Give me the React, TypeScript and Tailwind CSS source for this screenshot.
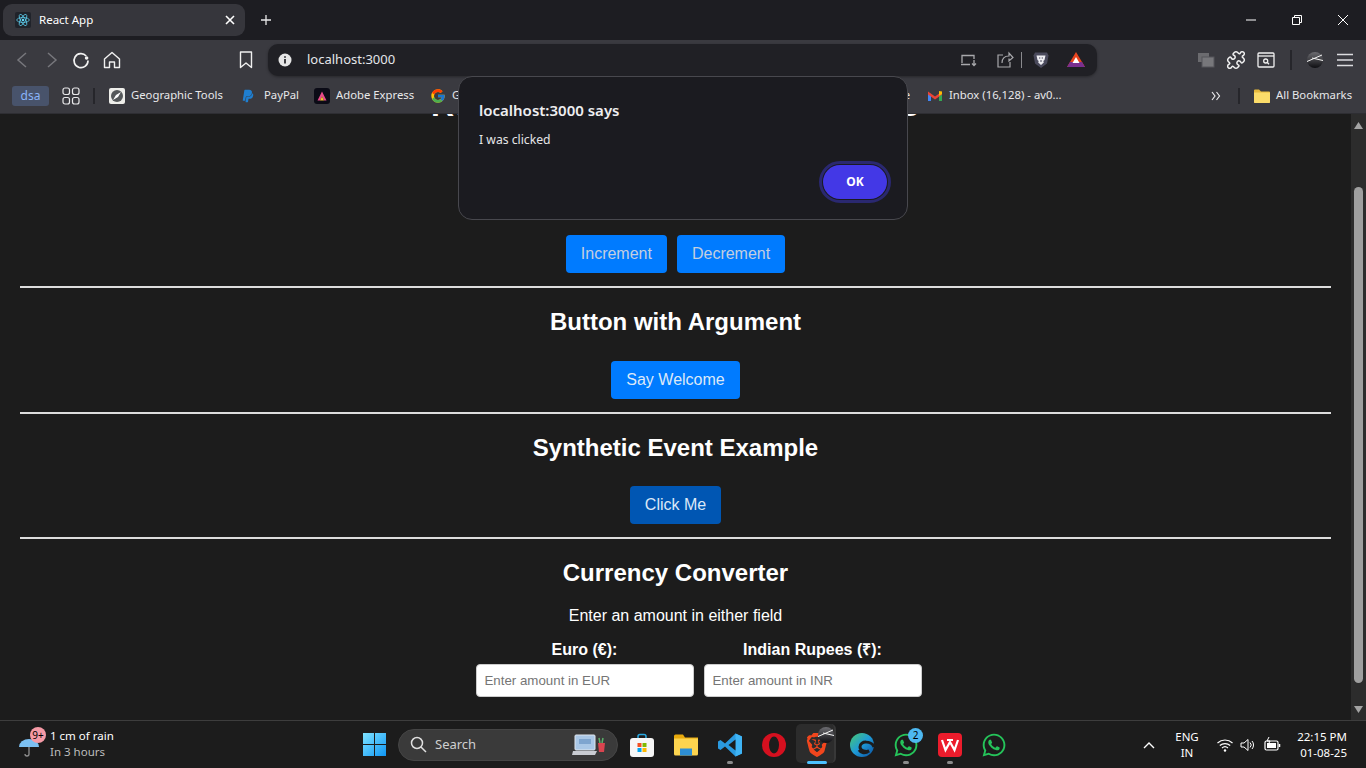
import React from "react";
import { FcGoogle } from "react-icons/fc";
import { FaPaypal, FaWhatsapp } from "react-icons/fa";
import { SiBrave } from "react-icons/si";

const ui = "font-['Noto_Sans','Open_Sans',sans-serif]";
const web = "font-['Liberation_Sans',Arial,sans-serif]";

function S({ w = 20, h = 20, vb = "0 0 20 20", c = "", children }: { w?: number; h?: number; vb?: string; c?: string; children: React.ReactNode }) {
  return (
    <svg width={w} height={h} viewBox={vb} fill="none" className={"shrink-0 " + c}>
      {children}
    </svg>
  );
}

function ReactIcon() {
  return (
    <div className="w-4 h-4 bg-[#20232a] rounded-[2px] flex items-center justify-center">
      <S w={14} h={14} vb="0 0 20 20">
        <circle cx="10" cy="10" r="1.8" fill="#61dafb" />
        <g stroke="#61dafb" strokeWidth="1">
          <ellipse cx="10" cy="10" rx="9" ry="3.5" />
          <ellipse cx="10" cy="10" rx="9" ry="3.5" transform="rotate(60 10 10)" />
          <ellipse cx="10" cy="10" rx="9" ry="3.5" transform="rotate(120 10 10)" />
        </g>
      </S>
    </div>
  );
}

function TitleBar() {
  return (
    <div className="h-10 bg-[#1d1d22] flex items-start shrink-0">
      <div className={"ml-[3px] mt-1 w-[242px] h-8 rounded-[9px] bg-[#36363c] flex items-center pl-3 pr-[9px] text-white text-[11.5px] " + ui}>
        <ReactIcon />
        <span className="ml-2 flex-1">React App</span>
        <S w={12} h={12} vb="0 0 12 12">
          <path d="M2 2l8 8M10 2l-8 8" stroke="#fff" strokeWidth="1.6" />
        </S>
      </div>
      <div className="ml-[15px] mt-[14px]">
        <S w={12} h={12} vb="0 0 12 12">
          <path d="M6 1v10M1 6h10" stroke="#e8e8ea" strokeWidth="1.3" />
        </S>
      </div>
      <div className="ml-auto flex items-center h-10">
        <div className="w-[46px] flex justify-center">
          <S w={10} h={10} vb="0 0 10 10">
            <path d="M0 5h10" stroke="#fff" strokeWidth="1" />
          </S>
        </div>
        <div className="w-[46px] flex justify-center">
          <S w={10} h={10} vb="0 0 10 10">
            <path d="M.5 2.5h7v7h-7zM2.5 2.5V.5h7v7h-2" stroke="#fff" strokeWidth="1" />
          </S>
        </div>
        <div className="w-[46px] flex justify-center">
          <S w={10} h={10} vb="0 0 10 10">
            <path d="M0 0l10 10M10 0L0 10" stroke="#fff" strokeWidth="1" />
          </S>
        </div>
      </div>
    </div>
  );
}

function ToolBar() {
  return (
    <div className="h-10 bg-[#3a3a40] flex items-center shrink-0">
      <div className="w-[268px] flex items-center shrink-0">
        <S w={18} h={18} vb="0 0 18 18" c="ml-[13px]"><path d="M13 2L5 9l8 7" stroke="#77777c" strokeWidth="1.5" /></S>
        <S w={18} h={18} vb="0 0 18 18" c="ml-3"><path d="M5 2l8 7-8 7" stroke="#77777c" strokeWidth="1.5" /></S>
        <S w={20} h={20} vb="0 0 20 20" c="ml-[10px]">
          <path d="M15.2 6A7 7 0 1 0 17 10.5" stroke="#f2f2f2" strokeWidth="1.7" />
          <circle cx="15.6" cy="8" r="1.8" fill="#f2f2f2" />
        </S>
        <S w={18} h={18} vb="0 0 18 18" c="ml-[12px]">
          <path d="M1.5 8L9 1.5 16.5 8v8.5h-5V11h-5v5.500h-5z" stroke="#f0f0f0" strokeWidth="1.4" strokeLinejoin="round" />
        </S>
        <S w={14} h={18} vb="0 0 14 18" c="ml-[118px]">
          <path d="M1.500 1h11v15.500L7 12l-5.500 4.500z" stroke="#f0f0f0" strokeWidth="1.4" strokeLinejoin="round" />
        </S>
      </div>
      <div className="w-[829px] h-8 rounded-[10px] bg-[#202025] flex items-center shrink-0 shadow-[0_1px_3px_rgba(0,0,0,0.35)]">
        <S w={14} h={14} vb="0 0 14 14" c="ml-[10px]">
          <circle cx="7" cy="7" r="6.500" fill="#e6e6e6" />
          <path d="M7 6v4.500M7 3.200v1.500" stroke="#202025" strokeWidth="1.700" />
        </S>
        <span className={"ml-[15px] text-[13px] text-[#e4e6ea] " + ui}>localhost:3000</span>
        <div className="ml-auto flex items-center">
          <S w={18} h={16} vb="0 0 18 16" c="mr-[1px]">
            <path d="M2 11V3.500h12V7M1 12.500h9" stroke="#a8a8ac" strokeWidth="1.300" />
            <path d="M14 8v5M12 11.500l2 2 2-2" stroke="#a8a8ac" strokeWidth="1.300" />
          </S>
          <S w={18} h={18} vb="0 0 18 18" c="ml-[17px]">
            <path d="M7 4H2v12h12v-5" stroke="#a8a8ac" strokeWidth="1.200" />
            <path d="M6 12c0-5 3-7 7-7V2l4 4.500L13 10V7.500" stroke="#a8a8ac" strokeWidth="1.200" />
          </S>
          <div className="ml-[7px] w-px h-4 bg-[#8a8a8e]" />
          <div className="ml-[11px] w-4 h-[18px] relative flex items-center justify-center">
            <S w={16} h={18} vb="0 0 16 18">
              <path d="M2 1.500h12l1.500 3-1.500 8L8 17l-6-4.500-1.500-8z" fill="#4a4a5c" />
              <path d="M3.500 4.500h9l-1 4.500-1.200 1 .5 1.500L8 14l-2.800-2.500.5-1.500-1.200-1z" fill="#eeeef2" />
              <path d="M6 7h1.300M8.700 7H10M8 9v2" stroke="#4a4a5c" strokeWidth="1" />
            </S>
          </div>
          <S w={20} h={18} vb="0 0 20 18" c="ml-[17px] mr-[11px]">
            <path d="M10 1l9 15H1z" fill="#e8441f" />
            <path d="M1 16l3-5h12l3 5z" fill="#7a2f8f" />
            <path d="M10 6l3.500 6h-7z" fill="#fff" />
          </S>
        </div>
      </div>
      <div className="flex-1 flex items-center">
        <S w={18} h={16} vb="0 0 18 16" c="ml-[100px]">
          <rect x="1" y="1" width="11" height="9" fill="#6b6b6f" />
          <rect x="5" y="5" width="12" height="10" fill="#77777b" stroke="#55555a" />
        </S>
        <S w={20} h={20} vb="0 0 24 24" c="ml-[11px]">
          <path d="M19.439 7.850c-.049.322.059.648.289.878l1.568 1.568c.47.47.706 1.087.706 1.704s-.235 1.233-.706 1.704l-1.611 1.611a.98.98 0 0 1-.837.276c-.47-.07-.802-.480-.968-.925a2.501 2.501 0 1 0-3.214 3.214c.446.166.855.497.925.968a.979.979 0 0 1-.276.837l-1.610 1.610a2.404 2.404 0 0 1-1.705.707 2.402 2.402 0 0 1-1.704-.706l-1.568-1.568a1.026 1.026 0 0 0-.877-.290c-.493.074-.840.504-1.020.968a2.500 2.500 0 1 1-3.237-3.237c.464-.180.894-.527.967-1.020a1.026 1.026 0 0 0-.289-.877l-1.568-1.568A2.402 2.402 0 0 1 1.998 12c0-.617.236-1.234.706-1.704L4.230 8.770c.24-.24.581-.353.917-.303.515.077.877.528 1.073 1.010a2.500 2.500 0 1 0 3.259-3.259c-.482-.196-.933-.558-1.010-1.073-.050-.336.062-.676.303-.917l1.525-1.525A2.402 2.402 0 0 1 12 1.998c.617 0 1.234.236 1.704.706l1.568 1.568c.23.230.556.338.877.290.493-.074.840-.504 1.020-.968a2.500 2.500 0 1 1 3.237 3.237c-.464.180-.894.527-.967 1.020Z" stroke="#f0f0f0" strokeWidth="1.800" />
        </S>
        <S w={18} h={16} vb="0 0 18 16" c="ml-[11px]">
          <rect x="1" y="1" width="16" height="14" rx="1" stroke="#f0f0f0" strokeWidth="1.300" />
          <path d="M1 4h16" stroke="#f0f0f0" strokeWidth="1.300" />
          <circle cx="8.700" cy="9" r="2" stroke="#f0f0f0" strokeWidth="1.300" />
          <path d="M10.300 10.500l1.700 1.700" stroke="#f0f0f0" strokeWidth="1.300" />
        </S>
        <div className="ml-[15px] w-[2px] h-5 bg-[#26262b]" />
        <div className="ml-[15px]"><Profile size={16} /></div>
        <S w={16} h={14} vb="0 0 16 14" c="ml-[14px]">
          <path d="M0 1.500h16M0 7h16M0 12.500h16" stroke="#dcdcdf" strokeWidth="1.600" />
        </S>
      </div>
    </div>
  );
}

function Profile({ size }: { size: number }) {
  return (
    <svg width={size} height={size} viewBox="0 0 16 16" className="shrink-0">
      <defs>
        <linearGradient id="pf" x1="0" y1="0" x2="0" y2="1">
          <stop offset="0" stopColor="#6d6d72" />
          <stop offset="1" stopColor="#0e0e12" />
        </linearGradient>
      </defs>
      <circle cx="8" cy="8" r="8" fill="url(#pf)" />
      <path d="M0 9.500L15 3M5 6l11 2.500" stroke="#f4f4f4" strokeWidth="1" />
    </svg>
  );
}

function Bm({ w, icon, text, gap = 6 }: { w: number; icon: React.ReactNode; text: string; gap?: number }) {
  return (
    <div style={{ width: w }} className={"flex items-center shrink-0 text-[11.3px] text-[#e8e8ea] whitespace-nowrap overflow-hidden " + ui}>
      {icon}
      <span style={{ marginLeft: gap }}>{text}</span>
    </div>
  );
}

function BookmarksBar() {
  return (
    <div className="h-[34px] pb-[2px] bg-[#3a3a40] flex items-center shrink-0 border-b border-[#2e2e33]">
      <div className={"ml-3 w-[37px] h-5 rounded-[3px] bg-[#48536b] flex items-center justify-center text-xs text-[#8ab4f8] " + ui}>dsa</div>
      <S w={18} h={18} vb="0 0 18 18" c="ml-[13px]">
        <g stroke="#e8e8ea" strokeWidth="1.200">
          <rect x="1" y="1" width="6.500" height="6.500" rx="2" />
          <rect x="10.500" y="1" width="6.500" height="6.500" rx="2" />
          <rect x="1" y="10.500" width="6.500" height="6.500" rx="2" />
          <rect x="10.500" y="10.500" width="6.500" height="6.500" rx="2" />
        </g>
      </S>
      <div className="ml-[13px] w-[2px] h-4 bg-[#26262b]" />
      <div className="ml-[14px] flex items-center">
        <Bm
          w={132}
          icon={
            <S w={16} h={16} vb="0 0 16 16">
              <rect width="16" height="16" rx="2" fill="#eeeeea" />
              <circle cx="8" cy="8" r="6" fill="#55585a" />
              <path d="M12 4L7 7 4 12l5-3z" fill="#fff" />
            </S>
          }
          text="Geographic Tools"
        />
        <Bm w={73} gap={9} icon={<FaPaypal size={14} color="#1f7fd1" className="shrink-0" />} text="PayPal" />
        <Bm
          w={116}
          icon={
            <div className="w-4 h-4 rounded-[3px] bg-[#0b0b16] flex items-center justify-center shrink-0">
              <S w={10} h={10} vb="0 0 10 10">
                <path d="M5 0.500L9.500 9.500H7L5 5.500 3 9.500H.5z" fill="#e84a8a" />
                <path d="M5 5.500L7 9.500H3z" fill="#f4c430" />
              </S>
            </div>
          }
          text="Adobe Express"
        />
        <Bm w={100} icon={<FcGoogle size={16} className="shrink-0" />} text="Google" />
      </div>
      <div className="ml-[372px] w-[8px] overflow-hidden flex justify-end">
        <span className={"text-[11.3px] text-[#e8e8ea] " + ui}>e</span>
      </div>
      <div className="ml-[18px] flex items-center">
        <Bm
          w={255}
          gap={7}
          icon={
            <S w={14} h={11} vb="0 0 14 11">
              <path d="M0 2v9h3V4.500z" fill="#4285f4" />
              <path d="M14 2v9h-3V4.500z" fill="#34a853" />
              <path d="M0 1.500L7 6.500l7-5V4.500L7 9.500 0 4.500z" fill="#ea4335" />
              <path d="M11 1l3 .5V4l-3 1.800z" fill="#fbbc04" />
            </S>
          }
          text="Inbox (16,128) - av0..."
        />
      </div>
      <div className={"w-4 text-[#e8e8ea] flex justify-center ml-[25px]"}>
        <S w={10} h={10} vb="0 0 10 10">
          <path d="M1 1l3 4-3 4M5.500 1l3 4-3 4" stroke="#e8e8ea" strokeWidth="1.200" />
        </S>
      </div>
      <div className="ml-[14px] w-[2px] h-4 bg-[#26262b]" />
      <div className="ml-[14px]">
        <Bm
          w={100}
          icon={
            <S w={16} h={14} vb="0 0 16 14">
              <path d="M0 1.500a1 1 0 0 1 1-1h4l2 2h8a1 1 0 0 1 1 1V13a1 1 0 0 1-1 1H1a1 1 0 0 1-1-1z" fill="#e6b93c" />
              <path d="M0 3.500h16V13a1 1 0 0 1-1 1H1a1 1 0 0 1-1-1z" fill="#fbdc6a" />
            </S>
          }
          text="All Bookmarks"
        />
      </div>
    </div>
  );
}

function Btn({ children, dark = false, light = false }: { children: React.ReactNode; dark?: boolean; light?: boolean }) {
  return (
    <button
      className={
        "h-[38px] px-[15px] rounded-[4px] text-base " +
        (dark ? "bg-[#0056b3] " : "bg-[#007bff] ") +
        (light ? "text-[#c4cfe0]" : "text-[#dce8f8]")
      }
    >
      {children}
    </button>
  );
}

function Page() {
  return (
    <div className={"h-[606px] shrink-0 flex overflow-hidden bg-[#1c1c1c] text-white " + web}>
      <div className="flex-1 min-w-0 px-5 text-center overflow-hidden">
        <h1 className="-mt-[27px] text-[32px] leading-[37px] font-bold whitespace-nowrap">React Event &amp; State Hook Demo</h1>
        <p className="mt-[55px] text-lg leading-[30px]">Counter: 0</p>
        <div className="mt-[26px] flex justify-center gap-[10px]">
          <Btn light>Increment</Btn>
          <Btn light>Decrement</Btn>
        </div>
        <hr className="mt-[13px] border-0 h-[2px] bg-[#dcdcdc]" />
        <h2 className="mt-5 text-2xl leading-7 font-bold">Button with Argument</h2>
        <div className="mt-[25px] flex justify-center">
          <Btn>Say Welcome</Btn>
        </div>
        <hr className="mt-[13px] border-0 h-[2px] bg-[#dcdcdc]" />
        <h2 className="mt-5 text-2xl leading-7 font-bold">Synthetic Event Example</h2>
        <div className="mt-6 flex justify-center">
          <Btn dark>Click Me</Btn>
        </div>
        <hr className="mt-[13px] border-0 h-[2px] bg-[#dcdcdc]" />
        <h2 className="mt-5 text-2xl leading-7 font-bold">Currency Converter</h2>
        <p className="mt-5 text-base leading-[18px]">Enter an amount in either field</p>
        <div className="mt-[16px] ml-[46px] flex justify-center gap-[10px]">
          <label className="w-[218px] block">
            <span className="block font-bold text-base leading-[18px] mb-[5px]">Euro (€):</span>
            <input readOnly placeholder="Enter amount in EUR" className="w-full h-[33px] px-2 rounded-[4px] bg-white border border-[#cccccc] text-[13.3px] placeholder:text-[#757575] text-black" />
          </label>
          <label className="w-[218px] block">
            <span className="block font-bold text-base leading-[18px] mb-[5px]">Indian Rupees (₹):</span>
            <input readOnly placeholder="Enter amount in INR" className="w-full h-[33px] px-2 rounded-[4px] bg-white border border-[#cccccc] text-[13.3px] placeholder:text-[#757575] text-black" />
          </label>
        </div>
      </div>
      <div className="w-[15px] shrink-0 bg-[#2c2c2c] flex flex-col items-center">
        <div className="h-[16px] mt-[3px] flex items-center">
          <S w={9} h={7} vb="0 0 9 7"><path d="M4.500 0L9 7H0z" fill="#a3a3a3" /></S>
        </div>
        <div className="mt-[54px] w-[9px] h-[496px] rounded-full bg-[#9f9f9f]" />
        <div className="mt-auto mb-[3px] h-[16px] flex items-center">
          <S w={9} h={7} vb="0 0 9 7"><path d="M0 0h9L4.500 7z" fill="#a3a3a3" /></S>
        </div>
      </div>
    </div>
  );
}

function TI({ children, dot = false }: { children: React.ReactNode; dot?: boolean }) {
  return (
    <div className="w-[44px] h-[47px] shrink-0 relative flex items-center justify-center">
      {children}
      {dot && <div className="absolute bottom-[4px] left-[19px] w-[6px] h-[3px] rounded-full bg-[#8c8c8c]" />}
    </div>
  );
}

function Taskbar() {
  return (
    <div className={"h-12 shrink-0 bg-[#1c1c1c] border-t border-[#3d3d3d] flex items-center " + ui}>
      <div className="w-[352px] shrink-0 flex items-center pl-[19px]">
        <div className="relative w-[22px] h-[24px] flex items-end">
          <S w={20} h={20} vb="0 0 20 20">
            <path d="M0 10a10 8 0 0 1 20 0z" fill="#7cc0f2" />
            <path d="M10 10v7a2 2 0 0 1-4 0" stroke="#8e8e8e" strokeWidth="1.300" />
          </S>
          <div className="absolute -top-[6px] left-[11px] w-4 h-4 rounded-full bg-[#f59aa6] text-[10px] leading-4 text-center text-black">9+</div>
        </div>
        <div className="ml-[9px] -mt-[1px]">
          <div className="text-[11.500px] leading-4 text-white">1 cm of rain</div>
          <div className="text-[11.500px] leading-4 text-[#bdbdbd]">In 3 hours</div>
        </div>
      </div>
      <TI>
        <svg width="23" height="23" viewBox="0 0 23 23">
          <defs>
            <linearGradient id="w" x1="0" y1="0" x2="1" y2="1">
              <stop offset="0" stopColor="#7fe3ff" />
              <stop offset="1" stopColor="#0f96f5" />
            </linearGradient>
          </defs>
          <path d="M0 0h11v11H0zM12 0h11v11H12zM0 12h11v11H0zM12 12h11v11H12z" fill="url(#w)" />
        </svg>
      </TI>
      <div className="ml-[2px] w-[220px] h-8 rounded-full bg-[#3a3a3a] flex items-center shrink-0 border border-[#454545]">
        <S w={17} h={17} vb="0 0 17 17" c="ml-[11px]">
          <circle cx="7" cy="7" r="5.500" stroke="#e0e0e0" strokeWidth="1.500" />
          <path d="M11 11l5 5" stroke="#e0e0e0" strokeWidth="1.500" />
        </S>
        <span className="ml-[8px] text-[13px] text-[#cfcfcf]">Search</span>
        <S w={34} h={24} vb="0 0 34 24" c="ml-auto mr-[11px]">
          <rect x="3" y="2" width="20" height="15" rx="1" fill="#a9c7e6" stroke="#dfe6ee" />
          <rect x="7" y="6" width="12" height="5" fill="#7ea5cf" />
          <path d="M1 18h24l-2 4H0z" fill="#c9ccd2" />
          <path d="M26 10h7l-1 9h-5z" fill="#d9444f" />
          <path d="M28 10l-1-5M30 10l1-5" stroke="#5ab06a" strokeWidth="1.500" />
        </S>
      </div>
      <div className="ml-[2px] flex items-center">
        <TI>
          <svg width="24" height="24" viewBox="0 0 24 24">
            <path d="M8 7V3.500a2 2 0 0 1 2-2h4a2 2 0 0 1 2 2V7" stroke="#29a8e0" strokeWidth="1.500" fill="none" />
            <rect y="5" width="24" height="19" rx="3" fill="#f6f6f6" />
            <path d="M7.500 10H11.500v4H7.500z" fill="#f25022" />
            <path d="M12.500 10H16.500v4h-4z" fill="#7fba00" />
            <path d="M7.500 15H11.500v4H7.500z" fill="#00a4ef" />
            <path d="M12.500 15H16.500v4h-4z" fill="#ffb900" />
          </svg>
        </TI>
        <TI>
          <svg width="24" height="22" viewBox="0 0 24 22">
            <path d="M0 2a1.500 1.500 0 0 1 1.500-1.500H9l2 3h13V6H0z" fill="#e8a90c" />
            <path d="M0 4.500h24V20a1.500 1.500 0 0 1-1.500 1.500h-21A1.500 1.500 0 0 1 0 20z" fill="#fcd44f" />
            <path d="M6 14.500h12v7H6z" fill="#2d8fd5" />
          </svg>
        </TI>
        <TI dot>
          <svg width="24" height="24" viewBox="0 0 24 24">
            <path d="M17.500 0.500L24 3.500v17L17.500 23.500 7 13.500 2.500 17 0 15.500V8.500L2.500 7 7 10.500z" fill="#2a9ae0" />
            <path d="M17.500 0.500L24 3.500v17l-6.500 3z" fill="#3fb4f5" />
            <path d="M17.500 6.500L10.500 12l7 5.500z" fill="#1c1c1c" />
          </svg>
        </TI>
        <TI>
          <svg width="24" height="24" viewBox="0 0 24 24">
            <circle cx="12" cy="12" r="12" fill="#d5101f" />
            <ellipse cx="12" cy="12" rx="5" ry="8.500" fill="#1c1c1c" />
          </svg>
        </TI>
        <div className="relative w-[44px] h-[47px] shrink-0 flex items-center justify-center">
          <div className="absolute left-[0px] top-[3px] w-[40px] h-[39px] rounded-[5px] bg-[#2c2c2c] border-r-2 border-r-[#383838]" />
          <div className="relative -ml-[2px]"><SiBrave size={24} color="#f1461d" /></div>
          <div className="absolute left-[22px] top-[6px]"><Profile size={16} /></div>
          <div className="absolute bottom-[4px] left-[11px] w-[20px] h-[3px] rounded-full bg-[#4cc2ff]" />
        </div>
        <TI>
          <svg width="24" height="24" viewBox="0 0 24 24">
            <defs>
              <linearGradient id="e" x1="0" y1="0" x2="1" y2="1">
                <stop offset="0" stopColor="#49c96e" />
                <stop offset="0.500" stopColor="#1f9bd8" />
                <stop offset="1" stopColor="#0a4e9e" />
              </linearGradient>
            </defs>
            <circle cx="12" cy="12" r="12" fill="url(#e)" />
            <path d="M24 14c-2-6-14-7-14 0 0 4 6 5 9 4-4 3-8 2-10-1" stroke="#1c1c1c" strokeWidth="3" fill="none" />
          </svg>
        </TI>
        <div className="relative">
          <TI dot>
            <FaWhatsapp size={26} color="#25c45a" />
          </TI>
          <div className="absolute top-[7px] left-[24px] w-[15px] h-[15px] rounded-full bg-[#4db8f0] text-[10px] leading-[15px] text-center text-black">2</div>
        </div>
        <TI dot>
          <svg width="24" height="24" viewBox="0 0 24 24">
            <rect width="24" height="24" rx="4" fill="#ec1c2c" />
            <path d="M4 7l3.500 10L12 9l4.500 8L20 7M9 7h6" stroke="#fff" strokeWidth="2.200" fill="none" />
          </svg>
        </TI>
        <TI>
          <FaWhatsapp size={26} color="#25c45a" />
        </TI>
      </div>
      <div className="flex-1 flex items-center justify-end">
        <S w={12} h={8} vb="0 0 12 8">
          <path d="M1 7l5-5 5 5" stroke="#fff" strokeWidth="1.400" />
        </S>
        <div className="ml-[18px] w-[28px] text-center text-[11.500px] leading-4 text-white">
          <div>ENG</div>
          <div>IN</div>
        </div>
        <S w={16} h={14} vb="0 0 16 14" c="ml-[16px]">
          <path d="M.5 5a11 11 0 0 1 15 0M2.800 7.500a8 8 0 0 1 10.400 0M5 10a4.500 4.500 0 0 1 6 0" stroke="#fff" strokeWidth="1.100" />
          <circle cx="8" cy="12.500" r="1.200" fill="#fff" />
        </S>
        <S w={16} h={14} vb="0 0 16 14" c="ml-[7px]">
          <path d="M1 5h3l4-3.500v11L4 9H1z" stroke="#fff" strokeWidth="1" />
          <path d="M10 4.500a3.500 3.500 0 0 1 0 5M12 3a6 6 0 0 1 0 8" stroke="#fff" strokeWidth="1" />
        </S>
        <S w={17} h={15} vb="0 0 17 15" c="ml-[8px]">
          <rect x="1" y="4" width="13" height="9" rx="1.500" stroke="#fff" strokeWidth="1.200" />
          <rect x="3" y="6" width="9" height="5" fill="#fff" />
          <path d="M15.500 7v3" stroke="#fff" strokeWidth="1.500" />
          <path d="M5 0L3 4h3L4 8" stroke="#fff" strokeWidth="1" />
        </S>
        <div className="ml-[14px] mr-[19px] w-[52px] text-right text-[11.500px] leading-4 text-white whitespace-nowrap">
          <div>22:15 PM</div>
          <div>01-08-25</div>
        </div>
      </div>
    </div>
  );
}

function AlertDialog() {
  return (
    <div className={"absolute left-[458px] top-[76px] w-[450px] h-[144px] rounded-[14px] bg-[#1b1b20] border border-[#48484e] text-white " + ui}>
      <div className="pl-5 pt-[23px] text-[15px] leading-5 font-semibold text-[#eeeef0]">localhost:3000 says</div>
      <div className="pl-5 pt-[10px] text-[12.2px] leading-5 text-[#e6e6e8]">I was clicked</div>
      <div className="flex justify-end pr-[20px] pt-[15px]">
        <button className="w-[64px] h-[34px] rounded-full bg-[#4338e6] text-xs font-bold text-white outline-[3px] outline-[#2a2870] outline-offset-[1px]">OK</button>
      </div>
    </div>
  );
}

export default function App() {
  return (
    <div className="relative w-[1366px] h-[768px] overflow-hidden flex flex-col bg-[#1c1c1c]">
      <TitleBar />
      <ToolBar />
      <BookmarksBar />
      <Page />
      <Taskbar />
      <AlertDialog />
    </div>
  );
}
